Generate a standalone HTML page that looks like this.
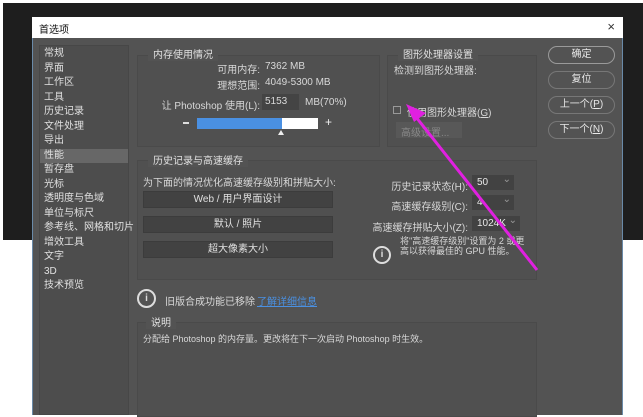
<!DOCTYPE html>
<html><head><meta charset="utf-8"><style>
*{margin:0;padding:0;box-sizing:border-box}
body{width:643px;height:415px;overflow:hidden;background:#fff;position:relative;font-family:"Liberation Sans","Noto Sans CJK SC",sans-serif;font-size:10px;color:#d8d8d8;white-space:nowrap}
.a{position:absolute}
.dark{left:3px;top:3px;width:640px;height:237px;background:#1e1e1e}
.dlg{left:32px;top:17px;width:591px;height:398px;background:#535353;border-left:1px solid #6a8aa8;border-right:1px solid #6a8aa8}
.title{left:32px;top:17px;width:591px;height:21px;background:#fff;color:#111;font-size:10px;padding:4px 7px}
.side{left:39px;top:45px;width:90px;height:370px;background:#4d4d4d;border:1px solid #474747;padding-top:1px}
.side div{height:14.5px;line-height:14.5px;padding-left:4px;font-size:10px;color:#e0e0e0}
.side .sel{background:#676767}
.box{border:1px solid #4a4a4a;background:#505050}
.lg{position:absolute;background:#535353;padding:0 5px;font-size:10px;color:#e0e0e0}
.btn{position:absolute;left:548px;width:67px;height:18px;border:1px solid #9a9a9a;border-radius:9px;text-align:center;line-height:16px;color:#e8e8e8;font-size:10px}
.pb{position:absolute;left:143px;width:190px;height:17px;background:#424242;border:1px solid #3c3c3c;text-align:center;line-height:15px;color:#e0e0e0}
.sel2{position:absolute;left:472px;width:42px;height:15px;background:#424242;color:#e8e8e8;padding-left:5px;line-height:15px}
.sel2:after{content:"⌄";position:absolute;right:3px;top:-3px;color:#999}
.r{position:absolute;text-align:right;color:#d8d8d8}
</style></head><body>
<div class="a dark"></div>
<div class="a dlg"></div>
<div class="a title">首选项<span style="position:absolute;right:8px;top:2px;font-size:13px;color:#333">×</span></div>
<div class="a side">
<div>常规</div><div>界面</div><div>工作区</div><div>工具</div><div>历史记录</div><div>文件处理</div><div>导出</div><div class="sel">性能</div><div>暂存盘</div><div>光标</div><div>透明度与色域</div><div>单位与标尺</div><div>参考线、网格和切片</div><div>增效工具</div><div>文字</div><div>3D</div><div>技术预览</div>
</div>
<div class="a box" style="left:137px;top:55px;width:243px;height:92px"></div>
<div class="lg" style="left:148px;top:46px">内存使用情况</div>
<div class="r" style="left:160px;top:61px;width:100px">可用内存:</div>
<div class="a" style="left:265px;top:61px">7362 MB</div>
<div class="r" style="left:160px;top:77px;width:100px">理想范围:</div>
<div class="a" style="left:265px;top:77px">4049-5300 MB</div>
<div class="r" style="left:150px;top:97px;width:110px">让 Photoshop 使用(L):</div>
<div class="a" style="left:262px;top:94px;width:37px;height:16px;background:#444;padding-left:3px;line-height:16px">5153</div>
<div class="a" style="left:305px;top:97px">MB(70%)</div>
<div class="a" style="left:183px;top:122px;width:6px;height:2px;background:#ddd"></div>
<div class="a" style="left:197px;top:118px;width:85px;height:11px;background:#4a90e2"></div>
<div class="a" style="left:282px;top:118px;width:36px;height:11px;background:#fff"></div>
<div class="a" style="left:278px;top:130px;width:0;height:0;border-left:3px solid transparent;border-right:3px solid transparent;border-bottom:5px solid #eee"></div>
<div class="a" style="left:325px;top:115px;font-size:12px;color:#eee">+</div>

<div class="a box" style="left:387px;top:55px;width:150px;height:92px"></div>
<div class="lg" style="left:398px;top:46px">图形处理器设置</div>
<div class="a" style="left:394px;top:62px">检测到图形处理器:</div>
<div class="a" style="left:393px;top:106px;width:8px;height:8px;border:1px solid #999"></div>
<div class="a" style="left:407px;top:104px">使用图形处理器(<u>G</u>)</div>
<div class="a" style="left:396px;top:122px;width:66px;height:16px;background:#585858;color:#888;padding:2px 5px">高级设置...</div>

<div class="btn" style="top:46px">确定</div>
<div class="btn" style="top:71px;border-color:#777">复位</div>
<div class="btn" style="top:96px;border-color:#777">上一个(<u>P</u>)</div>
<div class="btn" style="top:121px;border-color:#777">下一个(<u>N</u>)</div>

<div class="a box" style="left:137px;top:160px;width:400px;height:120px"></div>
<div class="lg" style="left:148px;top:152px">历史记录与高速缓存</div>
<div class="a" style="left:143px;top:174px">为下面的情况优化高速缓存级别和拼贴大小:</div>
<div class="pb" style="top:191px">Web / 用户界面设计</div>
<div class="pb" style="top:216px">默认 / 照片</div>
<div class="pb" style="top:241px">超大像素大小</div>
<div class="r" style="left:360px;top:178px;width:108px">历史记录状态(H):</div>
<div class="sel2" style="top:175px">50</div>
<div class="r" style="left:360px;top:198px;width:108px">高速缓存级别(C):</div>
<div class="sel2" style="top:195px">4</div>
<div class="r" style="left:360px;top:219px;width:108px">高速缓存拼贴大小(Z):</div>
<div class="sel2" style="top:216px;width:48px">1024K</div>
<div class="a" style="left:400px;top:236px;font-size:9px;line-height:10px">将"高速缓存级别"设置为 2 或更<br>高以获得最佳的 GPU 性能。</div>
<div class="a" style="left:373px;top:246px;width:18px;height:18px;border:2px solid #ddd;border-radius:50%;text-align:center;line-height:14px;font-weight:bold;color:#ddd">i</div>

<div class="a" style="left:137px;top:289px;width:19px;height:19px;border:2px solid #ddd;border-radius:50%;text-align:center;line-height:15px;font-weight:bold;color:#ddd">i</div>
<div class="a" style="left:165px;top:293px">旧版合成功能已移除</div>
<div class="a" style="left:257px;top:293px;color:#4a90e2;text-decoration:underline">了解详细信息</div>

<div class="a box" style="left:137px;top:322px;width:400px;height:95px"></div>
<div class="lg" style="left:146px;top:314px">说明</div>
<div class="a" style="left:143px;top:332px;font-size:9px">分配给 Photoshop 的内存量。更改将在下一次启动 Photoshop 时生效。</div>

<svg class="a" style="left:0;top:0" width="643" height="415">
<line x1="537" y1="270" x2="412" y2="112" stroke="#e020e0" stroke-width="3"/>
<polygon points="406,104 426,113 414,122" fill="#e020e0"/>
</svg>
</body></html>
